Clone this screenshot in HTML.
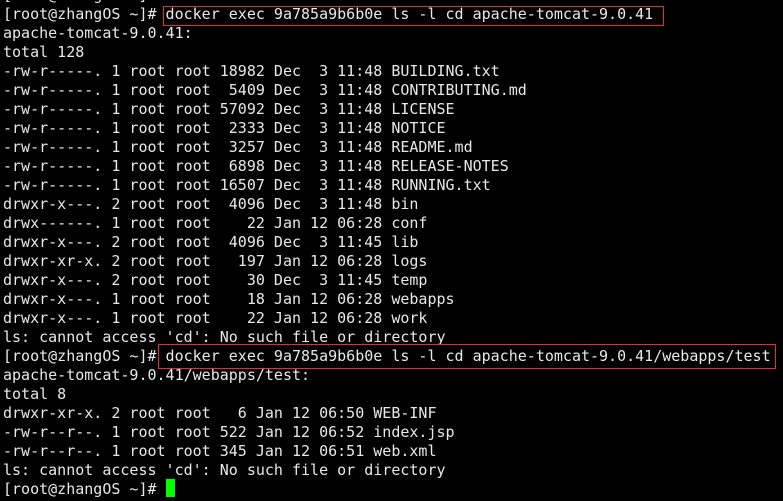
<!DOCTYPE html>
<html><head><style>
html,body{margin:0;padding:0;background:#000;width:783px;height:501px;overflow:hidden}
pre{position:absolute;left:3px;top:-14px;margin:0;font-family:"DejaVu Sans Mono",monospace;font-size:15px;line-height:19px;color:#e8e8e8}
.box{position:absolute;border:1px solid #e03030}
.cur{position:absolute;left:166px;top:479px;width:9px;height:18px;background:#00ff00}
</style></head><body>
<pre>[root@zhangOS ~]#
[root@zhangOS ~]# docker exec 9a785a9b6b0e ls -l cd apache-tomcat-9.0.41
apache-tomcat-9.0.41:
total 128
-rw-r-----. 1 root root 18982 Dec  3 11:48 BUILDING.txt
-rw-r-----. 1 root root  5409 Dec  3 11:48 CONTRIBUTING.md
-rw-r-----. 1 root root 57092 Dec  3 11:48 LICENSE
-rw-r-----. 1 root root  2333 Dec  3 11:48 NOTICE
-rw-r-----. 1 root root  3257 Dec  3 11:48 README.md
-rw-r-----. 1 root root  6898 Dec  3 11:48 RELEASE-NOTES
-rw-r-----. 1 root root 16507 Dec  3 11:48 RUNNING.txt
drwxr-x---. 2 root root  4096 Dec  3 11:48 bin
drwx------. 1 root root    22 Jan 12 06:28 conf
drwxr-x---. 2 root root  4096 Dec  3 11:45 lib
drwxr-xr-x. 2 root root   197 Jan 12 06:28 logs
drwxr-x---. 2 root root    30 Dec  3 11:45 temp
drwxr-x---. 1 root root    18 Jan 12 06:28 webapps
drwxr-x---. 1 root root    22 Jan 12 06:28 work
ls: cannot access 'cd': No such file or directory
[root@zhangOS ~]# docker exec 9a785a9b6b0e ls -l cd apache-tomcat-9.0.41/webapps/test
apache-tomcat-9.0.41/webapps/test:
total 8
drwxr-xr-x. 2 root root   6 Jan 12 06:50 WEB-INF
-rw-r--r--. 1 root root 522 Jan 12 06:52 index.jsp
-rw-r--r--. 1 root root 345 Jan 12 06:51 web.xml
ls: cannot access 'cd': No such file or directory
[root@zhangOS ~]# </pre>
<div class="box" style="left:163px;top:6px;width:499px;height:18px"></div>
<div class="box" style="left:158px;top:344px;width:616px;height:23px"></div>
<div class="cur"></div>
</body></html>
